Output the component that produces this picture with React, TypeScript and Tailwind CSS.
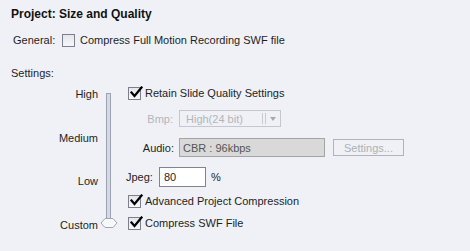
import React from "react";

function Check({ checked }: { checked: boolean }) {
  return (
    <div className="w-[13px] h-[13px] border border-[#7d808c] bg-gradient-to-b from-[#e4e6ec] to-[#f6f7fa] relative shrink-0">
      {checked && (
        <svg className="absolute left-[1px] top-[-2px]" width="13" height="13" viewBox="0 0 13 13">
          <path d="M1.5 6.5 L4.5 10 L11.5 1.5" fill="none" stroke="#000" strokeWidth="2.2" strokeLinecap="square" />
        </svg>
      )}
    </div>
  );
}

export default function App() {
  return (
    <div
      className="w-[470px] h-[251px] bg-[#eff1f6] text-[#1e1e1e] text-[11px] leading-[14px] overflow-hidden"
      style={{ fontFamily: '"Liberation Sans", Arial, sans-serif' }}
    >
      <div className="pl-[11px] pt-[7px] font-bold text-[12px] leading-[14px] text-[#111]">Project: Size and Quality</div>
      <div className="flex items-center mt-[12px] pl-[13px] h-[14px]">
        <span className="w-[49px]">General:</span>
        <Check checked={false} />
        <span className="ml-[5px]">Compress Full Motion Recording SWF file</span>
      </div>
      <div className="pl-[11px] mt-[19px] h-[14px]">Settings:</div>
      <div className="flex mt-[6px] pl-[11px]">
        <div className="w-[87px] h-[146px] flex flex-col justify-between items-end pt-[1px]">
          <span>High</span>
          <span>Medium</span>
          <span>Low</span>
          <span>Custom</span>
        </div>
        <div className="w-[20px] relative ml-[2px]">
          <div className="absolute left-[6px] top-[7px] w-[5px] h-[129px] border border-[#9ea3b3] bg-[#d6d9e2]" />
          <svg className="absolute left-[0px] top-[131px]" width="18" height="12" viewBox="0 0 18 12">
            <path d="M1 6 L5 1.5 L13 1.5 L17 6 L13 10.5 L5 10.5 Z" fill="#f7f8fa" stroke="#a3a7b5" strokeWidth="1" />
          </svg>
        </div>
        <div className="flex flex-col ml-[8px]">
          <div className="flex items-center h-[14px]">
            <Check checked={true} />
            <span className="ml-[4px]">Retain Slide Quality Settings</span>
          </div>
          <div className="flex items-center mt-[10px] h-[17px]">
            <span className="w-[45px] text-right text-[#b2b5bb]">Bmp:</span>
            <div className="ml-[6px] w-[102px] h-[17px] border border-[#c4c7cd] flex items-center text-[#b2b5bb]">
              <span className="ml-[6px] flex-1">High(24 bit)</span>
              <span className="w-[1px] h-[11px] bg-[#c8cad0]" />
              <span className="w-[1px] h-[11px] bg-[#c8cad0] ml-[2px]" />
              <svg className="ml-[4px] mr-[4px]" width="6" height="4" viewBox="0 0 6 4">
                <path d="M0 0 L6 0 L3 4 Z" fill="#a6a9b0" />
              </svg>
            </div>
          </div>
          <div className="flex items-center mt-[11px] h-[19px]">
            <span className="w-[46px] text-right">Audio:</span>
            <div className="ml-[5px] w-[146px] h-[19px] border border-[#a2a4a8] bg-[#d9d9d9] flex items-center text-[#555]">
              <span className="ml-[3px]">CBR : 96kbps</span>
            </div>
            <div className="ml-[8px] w-[71px] h-[17px] border border-[#b1b3b8] flex items-center justify-center text-[#adb0b5]">
              Settings...
            </div>
          </div>
          <div className="flex items-center mt-[10px] h-[20px]">
            <span className="w-[33px] -ml-[2px]">Jpeg:</span>
            <div className="w-[47px] h-[20px] border border-[#7f8490] bg-white flex items-center">
              <span className="ml-[4px]">80</span>
            </div>
            <span className="ml-[5px]">%</span>
          </div>
          <div className="flex items-center mt-[7px] h-[14px]">
            <Check checked={true} />
            <span className="ml-[4px]">Advanced Project Compression</span>
          </div>
          <div className="flex items-center mt-[8px] h-[14px]">
            <Check checked={true} />
            <span className="ml-[4px]">Compress SWF File</span>
          </div>
        </div>
      </div>
    </div>
  );
}
